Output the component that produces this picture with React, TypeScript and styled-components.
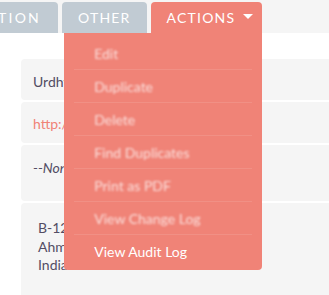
import React from "react";
import styled, { createGlobalStyle } from "styled-components";

const Global = createGlobalStyle`
  html, body { margin: 0; padding: 0; background: #ffffff; }
  body { font-family: Lato, "Open Sans", "Liberation Sans", sans-serif; overflow: hidden; }
  * { box-sizing: border-box; }
`;

const Page = styled.div`
  width: 329px;
  height: 295px;
  overflow: hidden;
  background: #ffffff;
`;

const TabBar = styled.div`
  height: 33px;
  padding-top: 2px;
  background: #f5f5f5;
  display: flex;
  align-items: stretch;
  gap: 4px;
`;

const ClippedSlot = styled.div`
  width: 58px;
  overflow: hidden;
  display: flex;
  justify-content: flex-end;
  flex-shrink: 0;
`;

const Tab = styled.div<{ $active?: boolean; $first?: boolean }>`
  position: relative;
  flex-shrink: 0;
  display: flex;
  align-items: center;
  padding: ${(p) =>
    p.$active ? "0 9px 0 16px" : p.$first ? "0 17px 0 16px" : "0 16px"};
  background: ${(p) => (p.$active ? "#f08377" : "#c1cbd3")};
  color: #ffffff;
  font-size: 14px;
  letter-spacing: ${(p) => (p.$first ? "2.2px" : "1.2px")};
  text-transform: uppercase;
  border-radius: 4px 4px 0 0;
  white-space: nowrap;
`;

const Caret = styled.span`
  width: 0;
  height: 0;
  margin-left: 8px;
  margin-top: -2px;
  border-left: 5px solid transparent;
  border-right: 5px solid transparent;
  border-top: 5px solid #ffffff;
`;

const Menu = styled.ul`
  position: absolute;
  top: 100%;
  right: 0;
  width: 198px;
  margin: 0;
  padding: 4px 10px 3px;
  list-style: none;
  background: #f08377;
  border-radius: 0 0 4px 4px;
  z-index: 10;
  letter-spacing: 0;
  text-transform: none;
`;

const MenuItem = styled.li`
  height: 33px;
  display: flex;
  align-items: center;
  padding-left: 20px;
  font-size: 14px;
  color: #ffffff;
  border-bottom: 1px solid rgba(255, 255, 255, 0.11);
  &:last-child { border-bottom: none; height: 32px; }
`;

const ItemLabel = styled.span<{ $disabled?: boolean }>`
  filter: ${(p) => (p.$disabled ? "blur(1.3px)" : "none")};
  opacity: ${(p) => (p.$disabled ? 0.75 : 1)};
`;

const Gap = styled.div`
  height: 26px;
`;

const Fields = styled.div`
  padding-left: 21px;
  display: flex;
  flex-direction: column;
  gap: 2px;
`;

const Field = styled.div<{ $h: number; $pt: number; $pl?: number }>`
  height: ${(p) => p.$h}px;
  padding: ${(p) => p.$pt}px 0 0 ${(p) => p.$pl ?? 12}px;
  background: #f5f5f5;
  border-radius: 4px 0 0 4px;
  font-size: 14px;
  line-height: 20px;
  color: #534d64;
  white-space: nowrap;
`;

const Link = styled.a`
  color: #f08377;
  text-decoration: none;
`;

const Empty = styled.em`
  font-style: italic;
`;

const AddressLine = styled.div`
  line-height: 18.5px;
`;

const items = [
  "Edit",
  "Duplicate",
  "Delete",
  "Find Duplicates",
  "Print as PDF",
  "View Change Log",
];

export default function App() {
  return (
    <Page>
      <Global />
      <TabBar>
        <ClippedSlot>
          <Tab $first>Location</Tab>
        </ClippedSlot>
        <Tab>Other</Tab>
        <Tab $active>
          Actions
          <Caret />
          <Menu>
            {items.map((label) => (
              <MenuItem key={label}>
                <ItemLabel $disabled>{label}</ItemLabel>
              </MenuItem>
            ))}
            <MenuItem>
              <ItemLabel>View Audit Log</ItemLabel>
            </MenuItem>
          </Menu>
        </Tab>
      </TabBar>
      <Gap />
      <Fields>
        <Field $h={41} $pt={13}>Urdhva Tech</Field>
        <Field $h={41} $pt={12}>
          <Link href="#">http://www.urdhva-tech.com</Link>
        </Field>
        <Field $h={56} $pt={13}>
          <Empty>--None--</Empty>
        </Field>
        <Field $h={110} $pt={16} $pl={17}>
          <AddressLine>B-12, Sumel</AddressLine>
          <AddressLine>Ahmedabad</AddressLine>
          <AddressLine>India</AddressLine>
        </Field>
      </Fields>
    </Page>
  );
}
